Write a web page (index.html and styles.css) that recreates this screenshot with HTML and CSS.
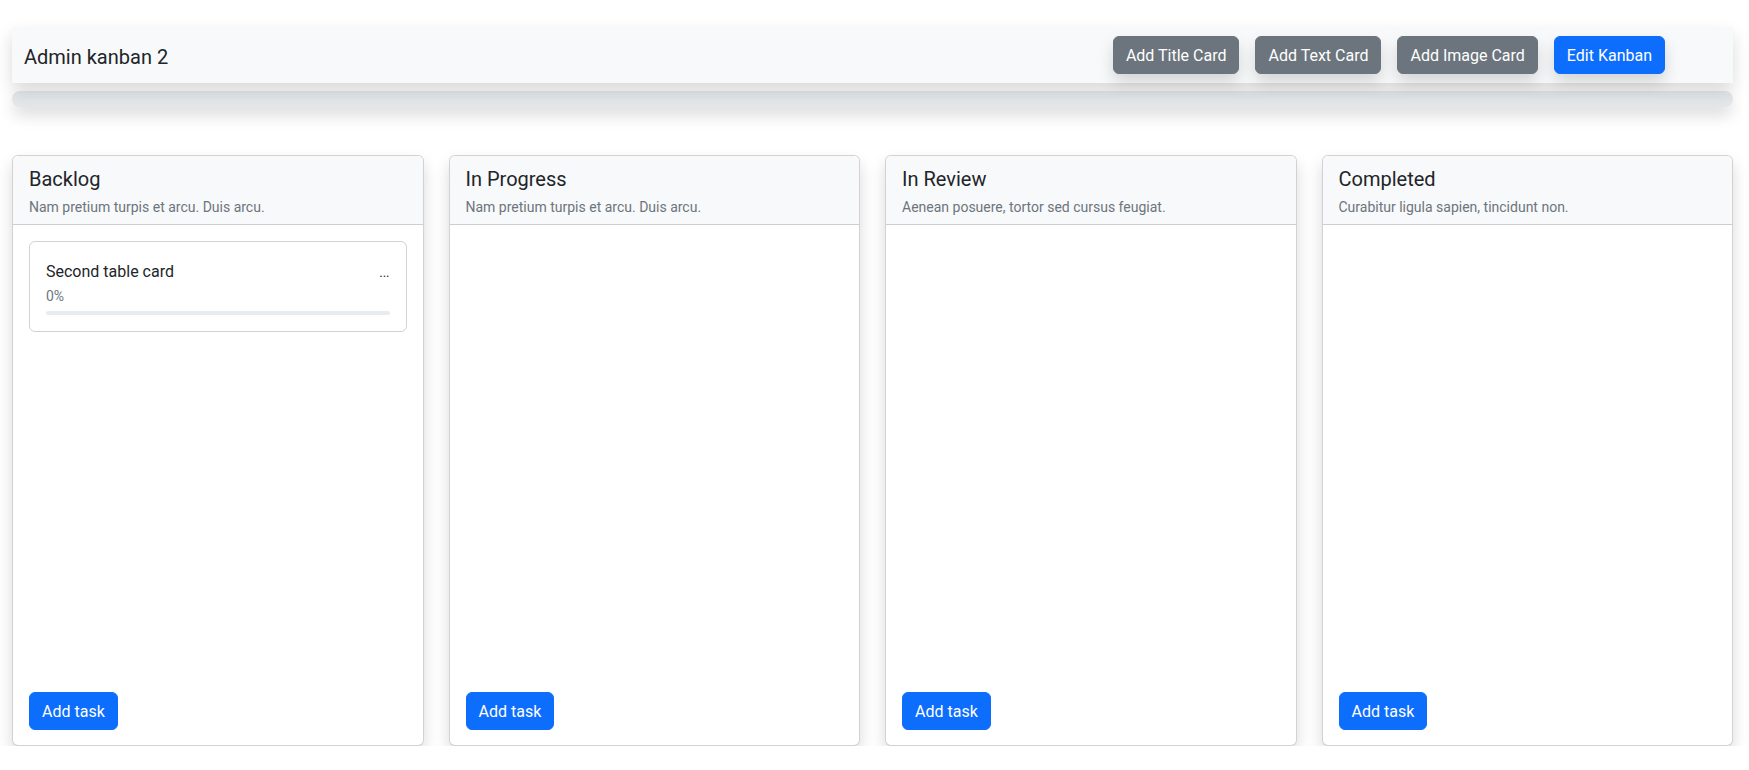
FILE: index.html
```html
<!DOCTYPE html>
<html lang="en">
<head>
<meta charset="utf-8">
<title>Admin kanban 2</title>
<link rel="stylesheet" href="styles.css">
</head>
<body>
<div class="page">
  <nav class="topbar">
    <span class="brand">Admin kanban 2</span>
    <div class="actions">
      <button class="btn btn-secondary">Add Title Card</button>
      <button class="btn btn-secondary">Add Text Card</button>
      <button class="btn btn-secondary">Add Image Card</button>
      <button class="btn btn-primary btn-raised">Edit Kanban</button>
    </div>
  </nav>
  <div class="subbar"></div>

  <main class="board">
    <section class="column">
      <header class="column-header">
        <h2 class="column-title">Backlog</h2>
        <p class="column-sub">Nam pretium turpis et arcu. Duis arcu.</p>
      </header>
      <div class="column-body">
        <article class="task">
          <div class="task-head">
            <span class="task-title">Second table card</span>
            <span class="task-more">...</span>
          </div>
          <div class="task-pct">0%</div>
          <div class="progress"><div class="progress-bar" style="width:0%"></div></div>
        </article>
      </div>
      <footer class="column-footer">
        <button class="btn btn-primary">Add task</button>
      </footer>
    </section>

    <section class="column">
      <header class="column-header">
        <h2 class="column-title">In Progress</h2>
        <p class="column-sub">Nam pretium turpis et arcu. Duis arcu.</p>
      </header>
      <div class="column-body"></div>
      <footer class="column-footer">
        <button class="btn btn-primary">Add task</button>
      </footer>
    </section>

    <section class="column">
      <header class="column-header">
        <h2 class="column-title">In Review</h2>
        <p class="column-sub">Aenean posuere, tortor sed cursus feugiat.</p>
      </header>
      <div class="column-body"></div>
      <footer class="column-footer">
        <button class="btn btn-primary">Add task</button>
      </footer>
    </section>

    <section class="column">
      <header class="column-header">
        <h2 class="column-title">Completed</h2>
        <p class="column-sub">Curabitur ligula sapien, tincidunt non.</p>
      </header>
      <div class="column-body"></div>
      <footer class="column-footer">
        <button class="btn btn-primary">Add task</button>
      </footer>
    </section>
  </main>
</div>
</body>
</html>
```

FILE: styles.css
```css
* { box-sizing: border-box; }

html, body {
  margin: 0;
  padding: 0;
  background: #fff;
}

body {
  font-family: Roboto, "Noto Sans", sans-serif;
  font-size: 16px;
  line-height: 1.5;
  color: #212529;
}

.page {
  padding: 27px 16px 0 12px;
}

.topbar {
  height: 56px;
  background: #f8f9fa;
  display: flex;
  align-items: center;
  justify-content: space-between;
  padding: 0 68px 0 12px;
  box-shadow: 0 8px 16px rgba(0, 0, 0, 0.15);
  position: relative;
  z-index: 2;
}

.brand {
  font-size: 20px;
  line-height: 30px;
  padding-top: 4px;
  color: #212529;
}

.actions {
  display: flex;
  gap: 16px;
}

.btn {
  font-family: inherit;
  font-size: 16px;
  line-height: 24px;
  padding: 7px 12px 5px;
  border: 1px solid transparent;
  border-radius: 6px;
  color: #fff;
  cursor: pointer;
}

.btn-secondary {
  background: #6c757d;
  border-color: #6c757d;
  box-shadow: 0 8px 16px rgba(0, 0, 0, 0.15);
}

.btn-primary {
  background: #0d6efd;
  border-color: #0d6efd;
}

.btn-raised {
  box-shadow: 0 8px 16px rgba(0, 0, 0, 0.15);
}

.subbar {
  margin-top: 8px;
  height: 16px;
  border-radius: 8px;
  background: #e4e7ea;
  box-shadow: 0 8px 16px rgba(0, 0, 0, 0.15);
}

.board {
  margin-top: 48px;
  display: grid;
  grid-template-columns: repeat(4, 1fr);
  gap: 25px;
}

.column {
  height: 591px;
  display: flex;
  flex-direction: column;
  border: 1px solid rgba(0, 0, 0, 0.175);
  border-radius: 6px;
  background: #fff;
  box-shadow: 0 8px 16px rgba(0, 0, 0, 0.15);
  overflow: hidden;
}

.column-header {
  background: #f8f9fa;
  border-bottom: 1px solid rgba(0, 0, 0, 0.175);
  padding: 11px 16px 6px;
}

.column-title {
  margin: 0 0 6px;
  font-size: 20px;
  font-weight: 400;
  line-height: 24px;
}

.column-sub {
  margin: 0;
  font-size: 14px;
  line-height: 21px;
  color: #6c757d;
}

.column-body {
  flex: 1;
  padding: 16px;
}

.column-footer {
  padding: 0 16px 15px;
}

.task {
  border: 1px solid rgba(0, 0, 0, 0.175);
  border-radius: 6px;
  padding: 16px;
}

.task-head {
  display: flex;
  justify-content: space-between;
  align-items: baseline;
  padding-top: 2px;
}

.task-title {
  font-size: 16px;
  line-height: 24px;
}

.task-more {
  font-size: 13px;
  line-height: 24px;
  color: #212529;
}

.task-pct {
  font-size: 14px;
  line-height: 21px;
  color: #6c757d;
  padding-top: 1px;
  margin-bottom: 4px;
}

.progress {
  height: 4px;
  border-radius: 4px;
  background: #e9ecef;
  overflow: hidden;
}

.progress-bar {
  height: 100%;
  background: #0d6efd;
}
```
